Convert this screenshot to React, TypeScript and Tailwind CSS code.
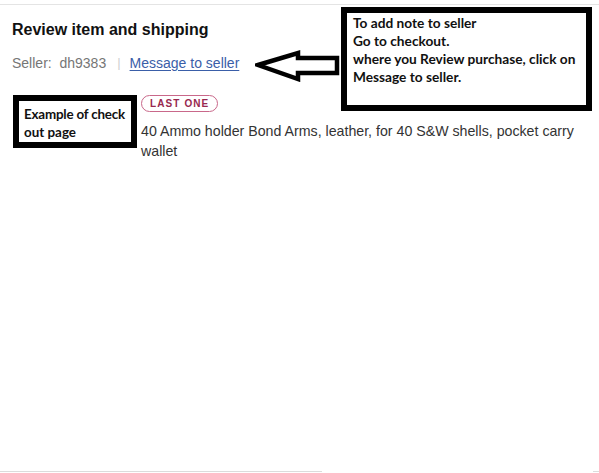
import React from "react";

export default function App() {
  return (
    <div className="relative w-[599px] h-[473px] bg-white overflow-hidden flex flex-col" style={{ fontFamily: '"Liberation Sans", Arial, sans-serif' }}>
      <div className="mt-[4px] h-px w-full bg-[#e4e4e4]" />
      <div className="pl-[12px] mt-[15px] text-[16px] leading-[20px] font-bold text-[#111]">Review item and shipping</div>
      <div className="pl-[12px] mt-[13px] flex items-center text-[14px] leading-[20px]">
        <span className="text-[#767676] whitespace-pre">Seller:  dh9383</span>
        <span className="ml-[11px] text-[#d0d0d0] text-[13px]">|</span>
        <a className="ml-[9px] text-[#3a5ea8] underline underline-offset-2" href="#">Message to seller</a>
      </div>
      <div className="ml-[141px] mt-[22px] w-[450px] flex flex-col items-start">
        <span className="h-[17px] px-[8px] rounded-full border border-[#c9688a] text-[#98284f] text-[10px] leading-[15px] font-bold tracking-[1.1px]">LAST ONE</span>
        <p className="mt-[9px] text-[14.2px] leading-[20px] text-[#333]">40 Ammo holder Bond Arms, leather, for 40 S&amp;W shells, pocket carry wallet</p>
      </div>
      <div className="mt-auto mb-[1px] flex justify-between">
        <div className="h-px w-[322px] bg-[#dcdcdc]" />
        <div className="h-px w-[6px] bg-[#dcdcdc]" />
      </div>

      <svg className="absolute left-[255px] top-[48px]" width="86" height="34" viewBox="0 0 86 34">
        <polygon points="3,17 43,5 43,10 82,10 82,25 43,25 43,31" fill="white" stroke="black" strokeWidth="4.5" strokeLinejoin="miter" />
      </svg>

      <div className="absolute left-[341px] top-[7px] w-[251px] h-[104px] border-[6px] border-black bg-white pl-[6px] pt-[1px] text-[13.7px] leading-[18px] font-bold text-[#111] whitespace-nowrap" style={{ fontFamily: 'Lato, "Open Sans", sans-serif' }}>
        <div>To add note to seller</div>
        <div>Go to checkout.</div>
        <div>where you Review purchase, click on</div>
        <div>Message to seller.</div>
      </div>

      <div className="absolute left-[13px] top-[95px] w-[124px] h-[53px] border-[6px] border-black bg-white pl-[5px] pt-[4px] text-[13.4px] leading-[18px] font-bold text-[#111] whitespace-nowrap" style={{ fontFamily: 'Lato, "Open Sans", sans-serif' }}>
        <div className="tracking-[-0.2px]">Example of check</div>
        <div>out page</div>
      </div>
    </div>
  );
}
